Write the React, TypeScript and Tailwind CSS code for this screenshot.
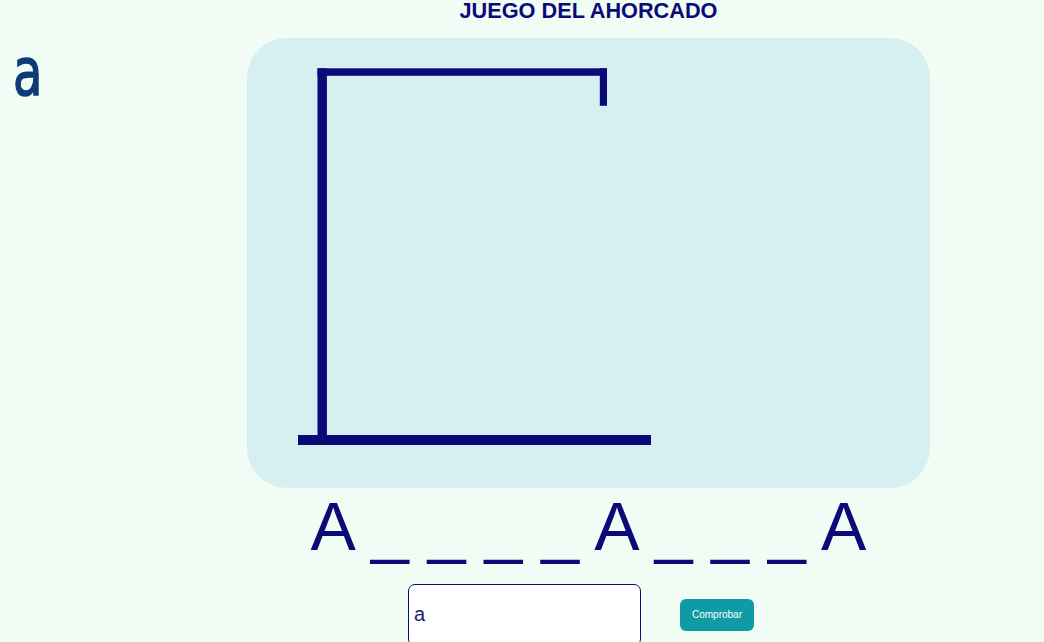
import { useState } from "react";

const WORD = ["A", "_", "_", "_", "_", "A", "_", "_", "_", "A"];

// gallows drawn in card coordinates (card is 683 x 450)
const Gallows: React.FC = () => (
  <svg viewBox="0 0 683 450" className="w-full h-full" fill="#0a0a78">
    <rect x="70.5" y="30.3" width="9.4" height="372" />
    <rect x="70.5" y="30.3" width="289.5" height="7.5" />
    <rect x="352.8" y="30.3" width="7.2" height="37.5" />
    <rect x="51" y="397" width="353" height="10" />
  </svg>
);

export default function App() {
  const [letter, setLetter] = useState("a");

  return (
    <div className="min-h-screen bg-[#f1fcf4] flex font-['Liberation_Sans',Arial,sans-serif]">
      {/* used letters */}
      <aside className="w-[133px] shrink-0 pl-[13px] pt-[40px]">
        <span className="inline-block origin-left scale-x-[0.74] text-[65px] leading-none text-[#0d3b78] [-webkit-text-stroke:1.6px_#0d3b78] font-['DejaVu_Sans',sans-serif]">
          a
        </span>
      </aside>

      <main className="flex-1 flex flex-col items-center">
        <h1 className="h-[20px] text-[21.7px] leading-[20px] font-bold text-[#0a0a78] pt-[1px]">
          JUEGO DEL AHORCADO
        </h1>

        {/* Board */}
        <div className="mt-[18px] w-[683px] h-[450px] rounded-[40px] bg-[#d6f0f1] overflow-hidden">
          <Gallows />
        </div>

        {/* Word */}
        <div className="mt-[4px] text-[68px] leading-none text-[#0a0a78] whitespace-pre">
          {WORD.join(" ")}
        </div>

        {/* Guess */}
        <div className="mt-[23.5px] flex items-center">
          <input
            value={letter}
            onChange={(e) => setLetter(e.target.value)}
            className="w-[233px] h-[62px] border border-[#0a0a78] rounded-[7px] bg-white px-[5px] text-[20px] text-[#1c1c6e] outline-none"
          />
          <button className="ml-[39px] mr-[15px] w-[74px] h-[32px] rounded-[6px] bg-[#0f9ba3] text-white text-[10px]">
            Comprobar
          </button>
        </div>
      </main>
    </div>
  );
}
